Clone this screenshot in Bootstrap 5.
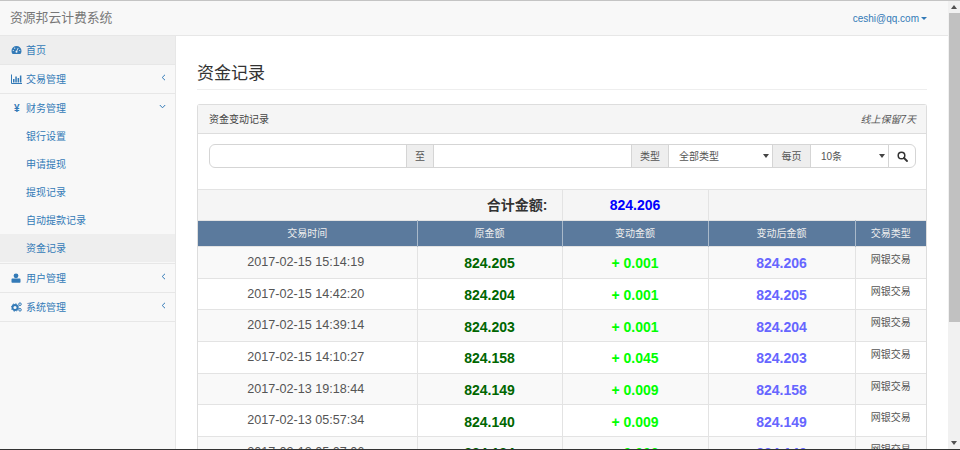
<!DOCTYPE html>
<html lang="zh-CN">
<head>
<meta charset="utf-8">
<title>资金记录</title>
<link href="https://cdn.jsdelivr.net/npm/bootstrap@5.3.0/dist/css/bootstrap.min.css" rel="stylesheet">
<style>
html,body{height:100%;overflow:hidden}
body{font-family:"Liberation Sans","Noto Sans CJK SC",sans-serif;font-size:10px;color:#555;background:#fff;border-top:1px solid #c4c4c4;border-bottom:1px solid #333}
.shell{height:100%}
.page-area{min-width:0;overflow:hidden}
.topbar{height:35px;background:#f8f8f8;border-bottom:1px solid #e7e7e7;padding:0 21px 0 10px}
.brand-name{font-size:12.8px;color:#777}
.user-link{font-size:10px;color:#337ab7;text-decoration:none}
.caret-down{display:inline-block;border-top:3px solid #337ab7;border-left:3px solid transparent;border-right:3px solid transparent;margin-left:2px;vertical-align:2px}
.body-row{height:414px;overflow:hidden}
.side{width:176px;flex:none;background:#f8f8f8;border-right:1px solid #e7e7e7}
.side-item{display:flex;align-items:center;height:29px;padding:0 10px 0 11px;border-bottom:1px solid #e7e7e7;color:#337ab7;text-decoration:none;font-size:10px}
.side-item.now{background:#eee}
.side-item.open-head{height:28px;border-bottom:0}
.side-ico{width:15px;flex:none;display:flex}
.side-arrow{margin-left:auto;margin-right:-1px;padding-bottom:4px;display:flex}
.side-sub{display:flex;align-items:center;height:28px;padding-left:26px;color:#337ab7;text-decoration:none;font-size:10px}
.side-sub.now{background:#eee}
.side-subs{border-bottom:1px solid #e7e7e7;padding-bottom:1px}
.content{flex:1;min-width:0;padding:0 21px 0 21px}
.page-title{font-size:17px;font-weight:400;color:#333;line-height:20px;margin:28px 0 0;padding-bottom:5px;border-bottom:1px solid #eee;height:26px}
.fund-panel{margin-top:14px;border:1px solid #ddd;border-bottom:0;border-radius:3px 3px 0 0;width:730px}
.fund-head{height:29px;background:#f5f5f5;border-bottom:1px solid #ddd;padding:0 10px 0 11px;color:#444}
.fund-note{font-style:italic;color:#555}
.fund-search{padding:10px 10px 21px 11px}
.fund-search .input-group-text{font-size:10px;padding:0 8px;height:24px;background:#eee;border-color:#d5d5d5;border-radius:0;color:#555}
.fund-search .input-group-text.text-wide{padding:0 8.5px}
.fund-search .form-control{height:24px;min-height:24px;font-size:10px;padding:0 8px;border-color:#d5d5d5;box-shadow:none}
.fund-search .form-select{height:24px;font-size:10px;padding:0 8px 0 10px;border-color:#d5d5d5;border-radius:0;flex:none;color:#555;background-image:url("data:image/svg+xml,%3Csvg xmlns='http://www.w3.org/2000/svg' viewBox='0 0 6 4'%3E%3Cpath fill='%23444' d='M0 0h6L3 4z'/%3E%3C/svg%3E");background-size:6px 4px;background-position:right 3px center}
.fund-search .sel-type{width:105px}
.fund-search .sel-size{width:79px}
.fund-search .btn-go{height:24px;width:28px;padding:0;background:#fff;border:1px solid #d5d5d5;display:flex;align-items:center;justify-content:center}
.fund-search .date-a{width:198px;flex:none}
.fund-table.table{table-layout:fixed;width:728px;margin:0;--bs-table-border-color:#e3e3e3;border-color:#e3e3e3;--bs-table-bg:transparent}
.fund-table.table>*>*>*{padding:0;text-align:center;vertical-align:middle;color:#555;background:transparent;box-shadow:none}
.fund-table.table>*>*>*:first-child{border-left-width:0}
.fund-table.table>*>*>*:last-child{border-right-width:0}
.fund-table.table .total-row>*{height:31px;background:#f5f5f5;font-size:14px;font-weight:700;color:#333;line-height:1}
.fund-table.table .total-row>.total-label{text-align:right;padding-right:14px}
.fund-table.table .total-row>.total-val{color:#00f}
.fund-table.table .head-row>*{height:26px;background:#5b7a9d;color:#eee;font-size:10px;font-weight:400;border-color:#a9b9ca;line-height:1}
.fund-table.table .data-row>*{height:31.7px;font-size:12.6px;line-height:16px}
.fund-table.table .data-row:nth-child(odd)>*{background:#f9f9f9}
.fund-table.table .data-row>.val-was{font-size:14px;font-weight:700;color:#060;padding-top:2px}
.fund-table.table .data-row>.val-chg{font-size:14px;font-weight:700;color:#0f0;padding-top:2px}
.fund-table.table .data-row>.val-new{font-size:14px;font-weight:700;color:#66f;padding-top:2px}
.fund-table.table .data-row>.val-kind{font-size:10px;vertical-align:top;padding-top:5px}
.fund-table.table .data-row>.val-time{vertical-align:top;padding-top:7px;padding-right:3px}
.fake-scroll{width:12px;flex:none;background:#f1f1f1}
.scroll-thumb{height:309px;background:#c1c1c1;margin-left:1px}
.scroll-end{height:12px;display:flex;align-items:center;justify-content:center;flex:none}
</style>
</head>
<body>
<div class="shell d-flex">
  <div class="page-area flex-grow-1">
    <nav class="topbar d-flex align-items-center justify-content-between">
      <span class="brand-name">资源邦云计费系统</span>
      <a class="user-link" href="#">ceshi@qq.com<span class="caret-down"></span></a>
    </nav>
    <div class="body-row d-flex">
      <aside class="side">
        <a class="side-item now" href="#"><span class="side-ico"><svg width="11" height="10" viewBox="0 0 11 10"><path fill="#337ab7" d="M5.500 1A5 5 0 0 0 .5 6c0 1 .3 2 .9 2.800.1.100.2.200.4.200h7.400c.2 0 .3-.1.4-.2.6-.8.9-1.800.9-2.800a5 5 0 0 0-5-5z"/><circle cx="5.500" cy="6.700" r="1" fill="#f3f3f3"/><path stroke="#f3f3f3" stroke-width=".8" d="M5.500 6.500 7.200 3"/><circle cx="2.300" cy="5.500" r=".6" fill="#f3f3f3"/><circle cx="8.700" cy="5.500" r=".6" fill="#f3f3f3"/><circle cx="3.700" cy="3.200" r=".6" fill="#f3f3f3"/></svg></span>首页</a>
        <a class="side-item" href="#"><span class="side-ico"><svg width="11" height="10" viewBox="0 0 11 10"><path fill="none" stroke="#337ab7" d="M.5 .5v9h10.500"/><path fill="#337ab7" d="M2 5h1.500v3.500H2zM4.300 2.500h1.500v6H4.300zM6.600 4h1.500v4.500H6.600zM8.900 1.500h1.500v7H8.900z"/></svg></span>交易管理<span class="side-arrow"><svg width="5" height="7" viewBox="0 0 5 7"><path fill="none" stroke="#337ab7" d="M4 .8 1.200 3.500 4 6.200"/></svg></span></a>
        <a class="side-item open-head" href="#"><span class="side-ico"><span class="fw-bold" style="color:#337ab7;padding-left:3px">¥</span></span>财务管理<span class="side-arrow"><svg width="7" height="5" viewBox="0 0 7 5"><path fill="none" stroke="#337ab7" d="M.8 1 3.500 3.800 6.200 1"/></svg></span></a>
        <div class="side-subs">
          <a class="side-sub" href="#">银行设置</a>
          <a class="side-sub" href="#">申请提现</a>
          <a class="side-sub" href="#">提现记录</a>
          <a class="side-sub" href="#">自动提款记录</a>
          <a class="side-sub now" href="#">资金记录</a>
        </div>
        <a class="side-item" href="#"><span class="side-ico"><svg width="10" height="10" viewBox="0 0 10 10"><circle cx="5" cy="2.800" r="2.400" fill="#337ab7"/><path fill="#337ab7" d="M1.500 5.500h7c.6 0 1 .5 1 1.200V9c0 .4-.3.700-.7.700H1.200C.8 9.700.500 9.400.500 9V6.700c0-.7.400-1.200 1-1.200z"/></svg></span>用户管理<span class="side-arrow"><svg width="5" height="7" viewBox="0 0 5 7"><path fill="none" stroke="#337ab7" d="M4 .8 1.200 3.500 4 6.200"/></svg></span></a>
        <a class="side-item" href="#"><span class="side-ico"><svg width="11" height="10" viewBox="0 0 11 10"><circle cx="4" cy="5.500" r="2.500" fill="none" stroke="#337ab7" stroke-width="1.800"/><circle cx="4" cy="5.500" r="3.700" fill="none" stroke="#337ab7" stroke-width="1" stroke-dasharray="1.400 1.500"/><circle cx="9" cy="2.200" r="1.300" fill="none" stroke="#337ab7"/><circle cx="9" cy="7.800" r="1.300" fill="none" stroke="#337ab7"/></svg></span>系统管理<span class="side-arrow"><svg width="5" height="7" viewBox="0 0 5 7"><path fill="none" stroke="#337ab7" d="M4 .8 1.200 3.500 4 6.200"/></svg></span></a>
      </aside>
      <main class="content">
        <h1 class="page-title">资金记录</h1>
        <section class="fund-panel">
          <div class="fund-head d-flex align-items-center justify-content-between">
            <span>资金变动记录</span>
            <span class="fund-note">线上保留7天</span>
          </div>
          <div class="fund-search">
            <div class="input-group flex-nowrap">
              <input type="text" class="form-control date-a" aria-label="开始">
              <span class="input-group-text">至</span>
              <input type="text" class="form-control" aria-label="结束">
              <span class="input-group-text">类型</span>
              <select class="form-select sel-type" aria-label="类型"><option>全部类型</option></select>
              <span class="input-group-text text-wide">每页</span>
              <select class="form-select sel-size" aria-label="每页"><option>10条</option></select>
              <button class="btn btn-go" type="button" aria-label="搜索"><svg width="11" height="11" viewBox="0 0 11 11"><circle cx="4.500" cy="4.500" r="3.300" fill="none" stroke="#333" stroke-width="1.500"/><path stroke="#333" stroke-width="1.800" stroke-linecap="round" d="M7 7l3 3"/></svg></button>
            </div>
          </div>
          <table class="table table-bordered fund-table">
            <colgroup><col style="width:219px"><col style="width:145px"><col style="width:146px"><col style="width:147px"><col style="width:71px"></colgroup>
            <thead>
              <tr class="total-row"><th colspan="2" class="total-label">合计金额:</th><th class="total-val">824.206</th><th colspan="2"></th></tr>
              <tr class="head-row"><th>交易时间</th><th>原金额</th><th>变动金额</th><th>变动后金额</th><th>交易类型</th></tr>
            </thead>
            <tbody>
              <tr class="data-row"><td class="val-time">2017-02-15 15:14:19</td><td class="val-was">824.205</td><td class="val-chg">+ 0.001</td><td class="val-new">824.206</td><td class="val-kind">网银交易</td></tr>
              <tr class="data-row"><td class="val-time">2017-02-15 14:42:20</td><td class="val-was">824.204</td><td class="val-chg">+ 0.001</td><td class="val-new">824.205</td><td class="val-kind">网银交易</td></tr>
              <tr class="data-row"><td class="val-time">2017-02-15 14:39:14</td><td class="val-was">824.203</td><td class="val-chg">+ 0.001</td><td class="val-new">824.204</td><td class="val-kind">网银交易</td></tr>
              <tr class="data-row"><td class="val-time">2017-02-15 14:10:27</td><td class="val-was">824.158</td><td class="val-chg">+ 0.045</td><td class="val-new">824.203</td><td class="val-kind">网银交易</td></tr>
              <tr class="data-row"><td class="val-time">2017-02-13 19:18:44</td><td class="val-was">824.149</td><td class="val-chg">+ 0.009</td><td class="val-new">824.158</td><td class="val-kind">网银交易</td></tr>
              <tr class="data-row"><td class="val-time">2017-02-13 05:57:34</td><td class="val-was">824.140</td><td class="val-chg">+ 0.009</td><td class="val-new">824.149</td><td class="val-kind">网银交易</td></tr>
              <tr class="data-row"><td class="val-time">2017-02-13 05:07:06</td><td class="val-was">824.134</td><td class="val-chg">+ 0.006</td><td class="val-new">824.140</td><td class="val-kind">网银交易</td></tr>
            </tbody>
          </table>
        </section>
      </main>
    </div>
  </div>
  <div class="fake-scroll d-flex flex-column">
    <div class="scroll-end"><svg width="6" height="4" viewBox="0 0 6 4"><path fill="#505050" d="M3 0 6 4H0z"/></svg></div>
    <div class="scroll-thumb"></div>
    <div class="flex-grow-1"></div>
    <div class="scroll-end"><svg width="6" height="4" viewBox="0 0 6 4"><path fill="#505050" d="M0 0h6L3 4z"/></svg></div>
  </div>
</div>
<script src="https://cdn.jsdelivr.net/npm/bootstrap@5.3.0/dist/js/bootstrap.bundle.min.js"></script>
</body>
</html>
